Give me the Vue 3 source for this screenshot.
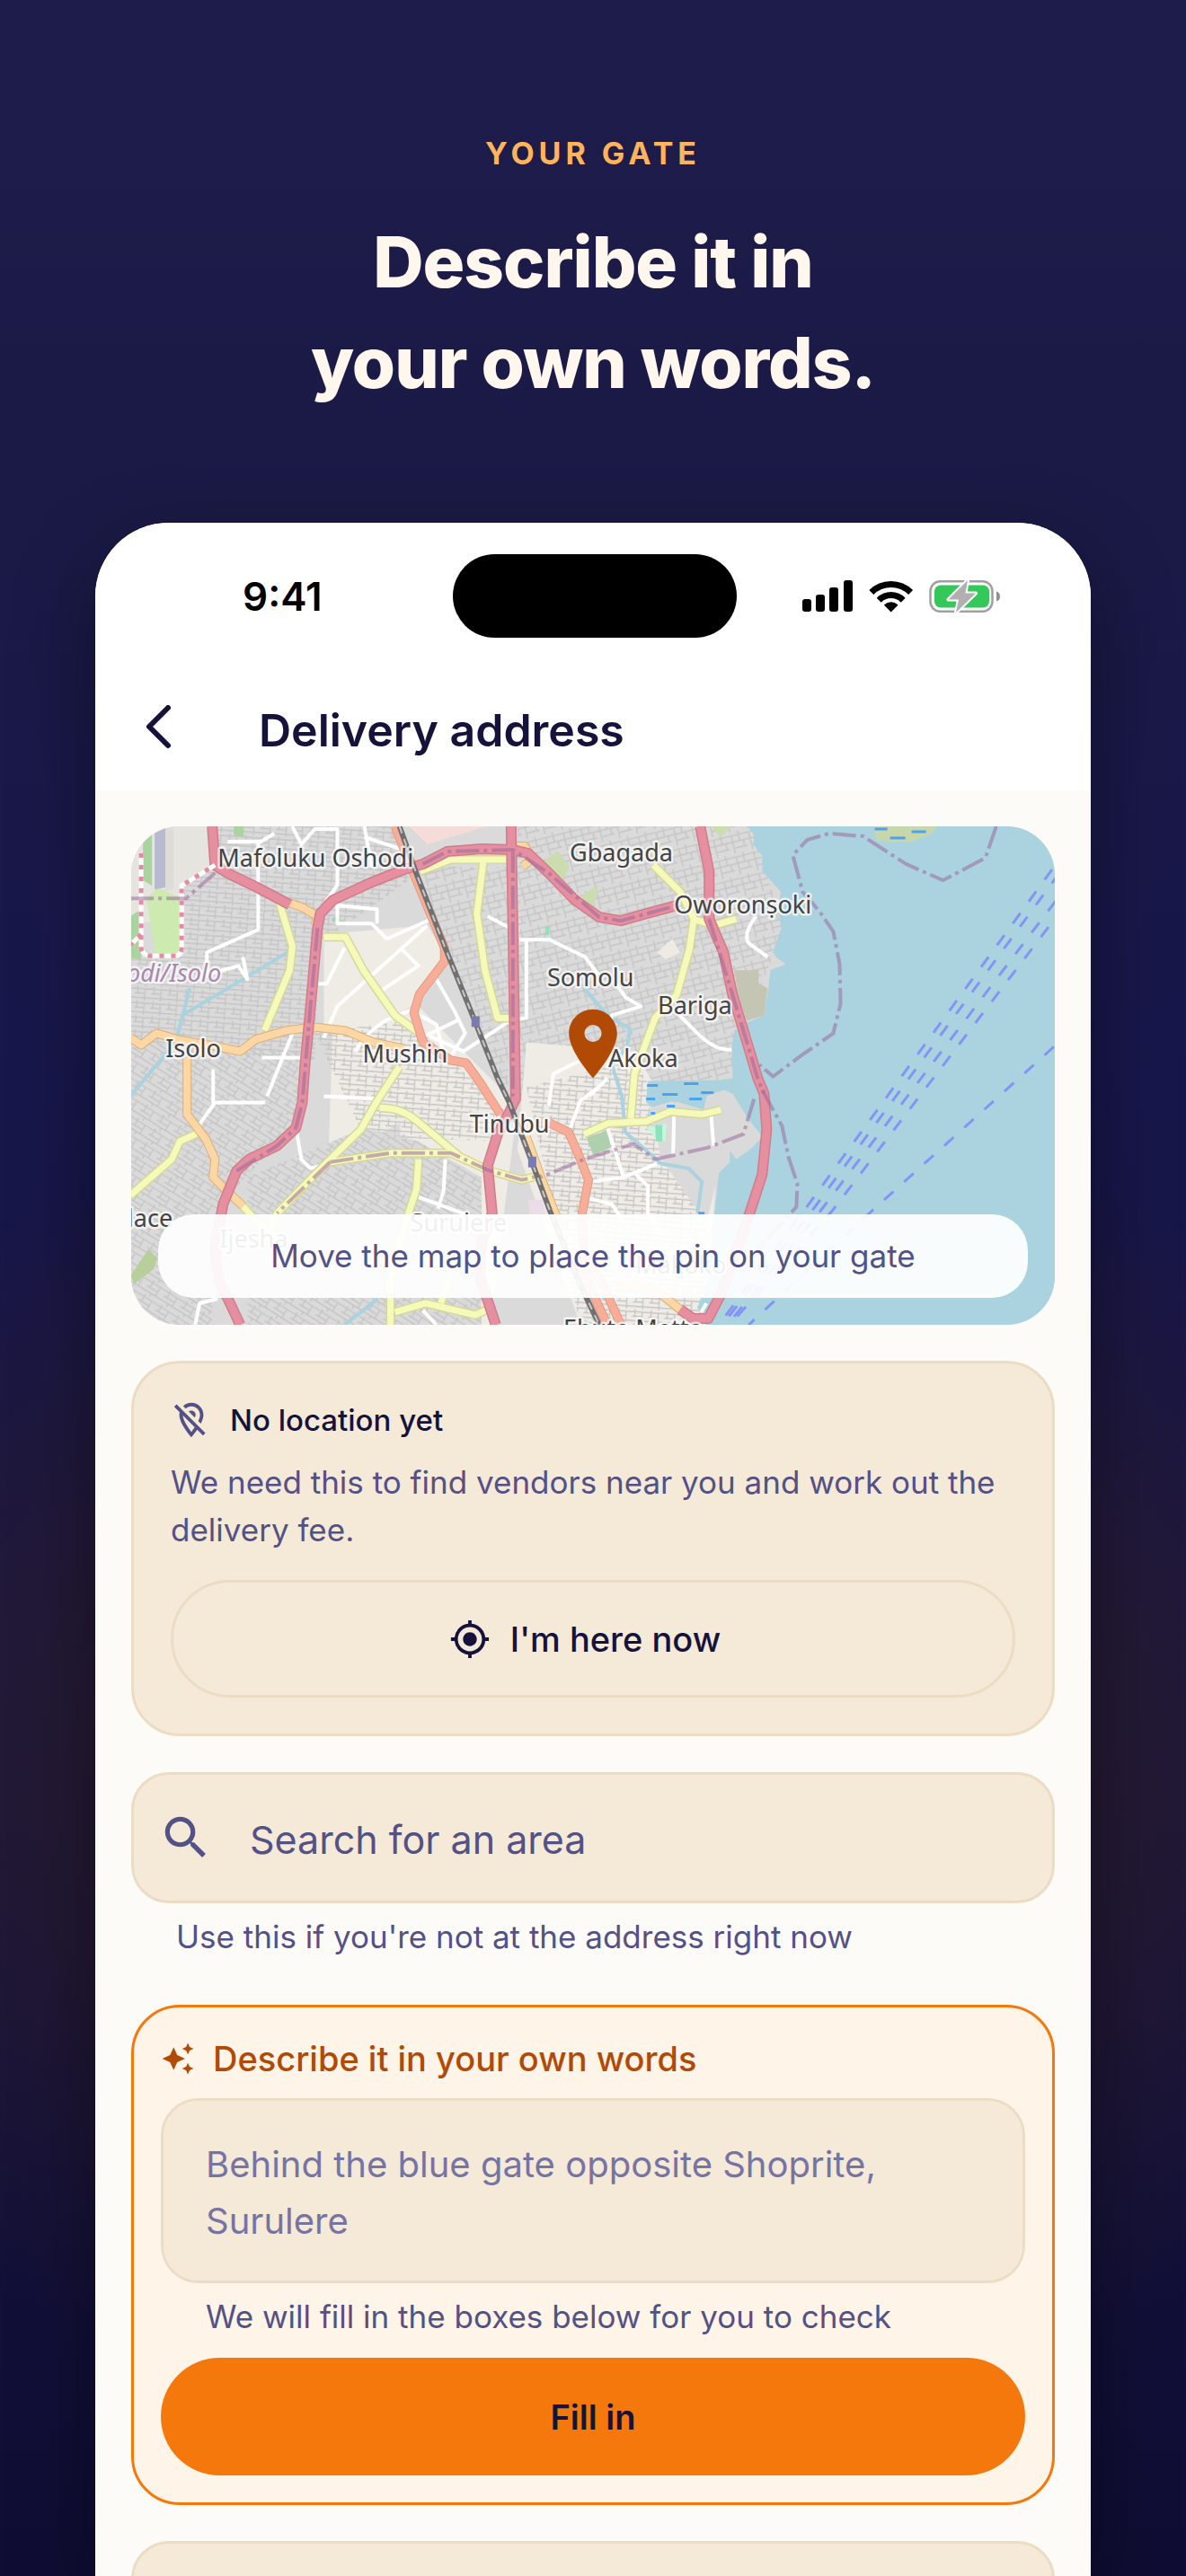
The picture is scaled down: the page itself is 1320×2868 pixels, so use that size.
<template>
  <main class="page">
    <header class="intro">
      <p class="eyebrow">YOUR GATE</p>
      <h1 class="headline">Describe it in<br>your own words.</h1>
    </header>

    <section class="phone">
      <div class="status-bar">
        <span class="status-time">9:41</span>
        <div class="island"></div>
        <svg class="status-icons" viewBox="0 0 221 36" aria-hidden="true">
          <rect x="0" y="21" width="10" height="14" rx="3" />
          <rect x="15" y="16" width="10" height="19" rx="3" />
          <rect x="30" y="8" width="10" height="27" rx="3" />
          <rect x="46" y="0" width="10" height="35" rx="3" />
          <path d="M76.800 13.600A31 31 0 0 1 120.600 13.600" class="wifi-arc" />
          <path d="M85.200 22.200A19 19 0 0 1 112.200 22.200" class="wifi-arc" />
          <path d="M90.800 27.600Q98.700 21 106.600 27.600L98.700 35.500Z" />
          <rect x="142.500" y="1.200" width="69" height="33.600" rx="11" class="battery-shell" />
          <rect x="147" y="5.500" width="61" height="25" rx="7" class="battery-level" />
          <path d="M216 12.500Q220 13.500 220 18T216 23.500Z" class="battery-nub" />
          <path d="M184 0L162.500 21.500H174L171 36L193 14.500H181.500Z" class="battery-bolt" />
        </svg>
      </div>

      <nav class="app-bar">
        <button class="back-btn" type="button" aria-label="Back">
          <svg viewBox="0 0 34 56" aria-hidden="true">
            <path d="M27 3L6 24L27 45" />
          </svg>
        </button>
        <h2 class="app-title">Delivery address</h2>
      </nav>

      <div class="content">
        <!-- Map -->
        <div class="map-card">
          <svg class="map" viewBox="0 0 1028 554" preserveAspectRatio="xMidYMid slice" role="img" aria-label="Map of Lagos">
            <defs>
              <pattern id="streets-a" width="22" height="18" patternUnits="userSpaceOnUse" patternTransform="rotate(32)">
                <path d="M0 3H22M0 9H14M0 14H22M4 0V9M14 3V14M9 14V18" />
              </pattern>
              <pattern id="streets-b" width="20" height="24" patternUnits="userSpaceOnUse" patternTransform="rotate(-14)">
                <path d="M0 4H20M0 11H20M6 18H20M5 4V24M13 0V11M17 11V18" />
              </pattern>
              <pattern id="streets-c" width="18" height="16" patternUnits="userSpaceOnUse" patternTransform="rotate(4)">
                <path d="M0 3H18M0 8H11M0 13H18M3 0V8M11 3V16" />
              </pattern>
            </defs>

            <rect width="1028" height="554" fill="#dadada" />
            <path v-for="(b, i) in blocks" :key="'b' + i" :d="b.d" :fill="b.fill" />
            <path :d="water" fill="#aad3df" />
            <path v-for="(b, i) in patches" :key="'p' + i" :d="b.d" :fill="b.fill" />

            <g class="creek">
              <path v-for="d in creeks" :key="d" :d="d" />
            </g>
            <g class="street">
              <path v-for="d in minorRoads" :key="d" :d="d" />
            </g>

            <g v-for="kind in roads" :key="kind.name" :class="['road', kind.name]">
              <path v-for="d in kind.paths" :key="'case' + d" :d="d" class="casing" />
              <path v-for="d in kind.paths" :key="d" :d="d" class="fill" />
            </g>

            <path :d="railway" class="rail-bed" />
            <path :d="railway" class="rail-ties" />
            <rect x="379" y="211" width="9" height="12" fill="#7a7ab0" />
            <rect x="442" y="367" width="9" height="12" fill="#7a7ab0" />

            <path d="M12 30V136Q14 144 24 144H50Q57 144 57 134V66L94 43M12 120L0 132" class="airport-fence" />
            <path d="M12 30V136Q14 144 24 144H50Q57 144 57 134V66L94 43M12 120L0 132" class="airport-dash" />

            <g class="boundary">
              <path v-for="d in boundaries" :key="d" :d="d" />
            </g>
            <g class="ferry">
              <path v-for="d in ferries" :key="d" :d="d" />
            </g>
            <path class="marsh" d="M827 3H841M868 6H884M844 13H861M574 288H586M615 286H631M591 298H608M634 296H648M573 303H583M621 303H635M596 311H605M578 319H583M631 430H638" />

            <text
              v-for="p in places"
              :key="p.name"
              :x="p.x"
              :y="p.y"
              :text-anchor="p.anchor || 'start'"
              :class="['place', p.kind]"
            >{{ p.name }}</text>
          </svg>

          <svg class="pin" viewBox="0 0 24 24" aria-hidden="true">
            <path d="M12 2C8.130 2 5 5.130 5 9c0 5.250 7 13 7 13s7-7.750 7-13c0-3.870-3.130-7-7-7zm0 9.500a2.500 2.500 0 0 1 0-5 2.500 2.500 0 0 1 0 5z" />
          </svg>
          <p class="map-hint">Move the map to place the pin on your gate</p>
        </div>

        <!-- Current location -->
        <section class="card">
          <div class="card-head">
            <svg class="icon-md" viewBox="0 0 24 24" aria-hidden="true">
              <path d="M12 4c2.760 0 5 2.240 5 5 0 1.060-.39 2.320-1 3.620l1.490 1.490C18.370 12.360 19 10.570 19 9c0-3.870-3.130-7-7-7-1.840 0-3.500.71-4.750 1.860l1.430 1.430C9.550 4.500 10.720 4 12 4zm0 2.500c-.59 0-1.130.21-1.560.56l3.500 3.500c.35-.43.56-.97.56-1.560 0-1.380-1.120-2.500-2.500-2.500zM3.410 2.860L2 4.270l3.180 3.180C5.070 7.950 5 8.470 5 9c0 5.250 7 13 7 13s1.670-1.850 3.380-4.350L18.730 21l1.410-1.410L3.410 2.860zM12 18.880c-2.010-2.580-4.800-6.740-4.980-9.590l6.920 6.920c-.65.98-1.330 1.890-1.940 2.670z" />
            </svg>
            <h3>No location yet</h3>
          </div>
          <p class="card-text">We need this to find vendors near you and work out the delivery fee.</p>
          <button class="btn outline-btn" type="button">
            <svg class="icon-md" viewBox="0 0 24 24" aria-hidden="true">
              <path d="M12 8c-2.210 0-4 1.790-4 4s1.790 4 4 4 4-1.790 4-4-1.790-4-4-4zm8.940 3A8.994 8.994 0 0 0 13 3.060V1h-2v2.060A8.994 8.994 0 0 0 3.060 11H1v2h2.060A8.994 8.994 0 0 0 11 20.940V23h2v-2.060A8.994 8.994 0 0 0 20.940 13H23v-2h-2.060zM12 19c-3.870 0-7-3.130-7-7s3.130-7 7-7 7 3.130 7 7-3.130 7-7 7z" />
            </svg>
            I'm here now
          </button>
        </section>

        <!-- Area search -->
        <div>
          <label class="search-box">
            <svg class="icon-lg" viewBox="0 0 24 24" aria-hidden="true">
              <path d="M15.500 14h-.79l-.28-.27A6.471 6.471 0 0 0 16 9.500 6.500 6.500 0 1 0 9.500 16c1.610 0 3.090-.59 4.230-1.570l.27.28v.79l5 4.990L20.490 19l-4.990-5zm-6 0C7.010 14 5 11.990 5 9.500S7.010 5 9.500 5 14 7.010 14 9.500 11.990 14 9.500 14z" />
            </svg>
            <input v-model="area" type="search" placeholder="Search for an area" aria-label="Search for an area">
          </label>
          <p class="helper search-helper">Use this if you're not at the address right now</p>
        </div>

        <!-- Free text description -->
        <form class="describe" @submit.prevent>
          <label class="describe-head" for="description">
            <svg class="icon-sm" viewBox="0 0 24 24" aria-hidden="true">
              <path d="M19 9l1.250-2.750L23 5l-2.750-1.250L19 1l-1.250 2.750L15 5l2.750 1.250L19 9zm-7.500.5L9 4 6.500 9.500 1 12l5.500 2.500L9 20l2.500-5.500L17 12l-5.500-2.500zM19 15l-1.250 2.750L15 19l2.750 1.250L19 23l1.250-2.750L23 19l-2.750-1.250L19 15z" />
            </svg>
            Describe it in your own words
          </label>
          <textarea
            id="description"
            v-model="description"
            rows="2"
            placeholder="Behind the blue gate opposite Shoprite, Surulere"
          ></textarea>
          <p class="helper">We will fill in the boxes below for you to check</p>
          <button class="btn fill-btn" type="submit">Fill in</button>
        </form>

        <label class="search-box">
          <input v-model="street" type="text" aria-label="Street address">
        </label>
      </div>
    </section>
  </main>
</template>

<script setup>
import { ref } from 'vue';

const area = ref('');
const description = ref('');
const street = ref('');

const water = 'M686 0L693 10L692 20L702 33L702 50L723 73L719 90L723 113L714 140L718 146L728 153L711 160L709 180L704 210L685 218L671 227L668 247L669 280L656 282L575 283L573 307L580 312L604 305L637 315L640 300L659 293L669 297L685 323L702 345L690 358L673 370L666 360L666 373L654 385L649 430L645 457L642 503L630 535L640 554H1028V0Z';

const blocks = [
  { d: 'M60 0H300L310 60L210 130L205 260L0 240V140L60 140Z', fill: 'url(#streets-c)' },
  { d: 'M0 240L190 250L185 330L100 420L90 554H0Z', fill: 'url(#streets-a)' },
  { d: 'M325 45L420 45V300L330 90Z', fill: 'url(#streets-b)' },
  { d: 'M430 0H690L725 110L665 280L560 330L430 300Z', fill: 'url(#streets-b)' },
  { d: 'M225 220L320 200L430 310L400 554H300V330L220 370Z', fill: '#efece6' },
  { d: 'M215 120L330 110L355 150L315 200L215 230Z', fill: '#efece6' },
  { d: 'M440 240L560 250L650 400L640 554H500L430 360Z', fill: '#efece6' },
  { d: 'M205 230L310 215L420 320L410 350L260 345Z', fill: 'url(#streets-c)' },
  { d: 'M130 390L260 335L320 350L390 390V554H130Z', fill: '#dadada' },
  { d: 'M130 390L260 335L320 350L390 390V554H130Z', fill: 'url(#streets-a)' },
  { d: 'M440 290L560 260L640 400V554H500Z', fill: 'url(#streets-c)' },
  { d: 'M575 300L690 325L655 380L640 440L590 370Z', fill: '#dadada' },
];

const patches = [
  { d: 'M0 0H90L94 45L60 62V100L0 110Z', fill: '#e5e4de' },
  { d: 'M14 0H24V66L14 60Z', fill: '#aad3a0' },
  { d: 'M0 100L12 92V148L0 146Z', fill: '#aad3a0' },
  { d: 'M18 80L30 68L57 80V140L50 146H28Z', fill: '#cdebb0' },
  { d: 'M27 0H39V68L27 70Z', fill: '#b9b9d2' },
  { d: 'M39 0H48V70L39 72Z', fill: '#dddcd8' },
  { d: 'M115 0H126V12L115 10Z', fill: '#aed1a0' },
  { d: 'M310 0H396L330 20Z', fill: '#f5dcd8' },
  { d: 'M460 38L475 27L488 45L480 60L462 52Z', fill: '#cbdcae' },
  { d: 'M504 75L520 65L514 92L498 90Z', fill: '#cbdcae' },
  { d: 'M645 0H668L656 12Z', fill: '#cbdcae' },
  { d: 'M585 140L602 125L611 140L595 148Z', fill: '#efebe3' },
  { d: 'M671 160H698V175L708 180L704 210L685 216L676 190Z', fill: '#c5c5b3' },
  { d: 'M0 500L20 470L30 480L26 492L5 508Z', fill: '#b8cf9c' },
  { d: 'M507 346L530 338L534 357L514 365Z', fill: '#aed0ae' },
  { d: 'M573 335L596 330L594 350L582 345Z', fill: '#c9f5dc' },
  { d: 'M583 332H591V350H584Z', fill: '#8be2bd' },
  { d: 'M442 415H458L462 433H444Z', fill: '#ecdcea' },
  { d: 'M461 111H465V121H461Z', fill: '#8be2bd' },
  { d: 'M224 102L233 98V106H224Z', fill: '#a5d2b0' },
  { d: 'M826 0L829 16L866 18L890 8L896 0Z', fill: '#c8d7ab' },
];

const creeks = [
  'M66 180L53 230M0 300L50 240L58 210L175 140',
  'M504 180L530 210L555 225L552 245L535 265L546 300L550 340L590 375L620 380L635 395L630 430',
  'M238 554L275 525',
];

const minorRoads = [
  'M108 17H145L160 8M142 15V115L85 140V165L120 155L130 170L125 145',
  'M180 0L190 20L205 3H230V65L208 98M260 0L268 45M260 12L300 25',
  'M230 85V108H268L285 125L335 103M232 88L274 92V108M330 110L230 200L215 235M300 135L320 155L275 185',
  'M209 175H218L238 135M250 250Q270 215 312 205L340 220L350 260M365 215L330 232L370 250L428 212',
  'M340 170L360 205L372 230L350 265M180 230L152 300M146 257H190M92 270V307H150M94 307L74 335',
  'M397 100L420 112M432 126H466L480 133L505 145L520 165M425 215L440 213V126',
  'M695 100Q680 120 687 130L708 145M540 175L550 190L567 200L535 210L530 240L500 260L470 275L465 310',
  'M610 210L630 230Q650 250 668 248M604 320L603 365M645 318L648 355M530 335L548 390L510 395M548 390L585 375',
  'M560 385L575 400V430L592 455M508 413L535 420L548 440M215 300L275 303M184 335L190 370L200 380L222 375',
  'M350 370L348 405L342 425M320 412L375 432M97 525L77 530L72 554M325 538L340 554M487 340L500 305L520 290M510 300L530 280',
  'M640 530L634 540',
];

const roads = [
  {
    name: 'yellow',
    paths: [
      'M165 83L180 133L177 160L149 227',
      'M215 123H239L259 160L294 210L321 230',
      'M322 50L356 37H418',
      'M392 40L385 97L394 160L408 213H421',
      'M299 267L273 307L256 337L222 370L200 392L163 430L150 460',
      'M277 313Q300 312 318 327L366 367L397 382L435 393L456 388',
      'M222 373L290 363H356L375 372',
      'M320 370L318 403L308 433L289 503V554',
      'M294 540L328 530L383 543L397 537M345 530L355 500',
      'M0 410L46 370L55 350L77 340',
      'M581 43L611 73L626 103L621 137L607 187L583 213L560 275L556 325',
      'M624 103L649 110L673 103',
      'M504 342L531 330L573 328L600 317L635 320L656 315',
      'M125 422L150 450',
    ],
  },
  {
    name: 'orange',
    paths: [
      'M0 235L12 243L29 230L53 237L87 243L122 250L139 237L173 227L204 223L239 227L270 240L304 247',
      'M63 257V320L84 348L94 370L92 390L105 403L125 422',
      'M177 85L191 90L208 100L205 110',
      'M425 22H438L446 36L436 45',
      'M458 395L476 440M440 345L458 395',
      'M566 510L587 518L611 537M540 512L566 510',
    ],
  },
  {
    name: 'coral',
    paths: [
      'M294 0L315 53L349 135V150L321 187L315 207L325 240L356 260L373 263L390 287L411 320',
      'M466 330L487 340L500 370L509 393L502 430L504 477L525 510L545 554',
      'M500 490L530 554',
    ],
  },
  {
    name: 'motorway',
    paths: [
      'M91 0L94 43L108 52L139 67L177 87',
      'M122 554L98 503L94 470L103 420L118 383L132 370L163 355L184 335L191 307L194 265L199 213L208 113L211 97L225 82L266 63L304 48L325 42L352 28L390 25L425 26L442 30L466 53L494 82L521 101L545 105L573 97L607 88',
      'M423 0L425 113L428 303L421 318L408 342L397 377L402 430L390 463L389 503L406 554',
      'M633 0L643 50V103L659 140L669 187L683 233L697 280L704 297L707 337L702 387L687 433L656 520L642 547H625L611 537',
    ],
  },
];

const railway = 'M299 0L318 53L349 133L383 217L408 280L421 307L445 370L466 427L500 510L521 554';

const boundaries = [
  'M962 0L950 35L903 60L862 42L814 11L776 8L752 15L736 32L747 73L766 95L781 117L788 153L789 197L781 230L745 255L714 278L699 265',
  'M702 293L724 333L731 367L741 397L740 423L697 470',
  'M693 303L681 342L642 357L583 370L559 353L504 370L456 390',
  'M0 80H62L94 52',
  'M208 113L199 213L191 307L184 335L163 355L118 383',
  'M425 26V300M325 42L352 28L425 26L466 53L521 101L545 105L607 88M643 103L669 187L697 280L704 297',
  'M222 373L290 363H356L397 382L435 393L456 388M222 373L163 430',
];

const ferries = [
  'M1024 48L750 425L659 547',
  'M1032 52L759 425L663 547',
  'M1028 83L767 427L669 547',
  'M1020 112L780 427L672 547',
  'M1026 245L821 430L687 554',
];

const places = [
  { name: 'Mafoluku Oshodi', x: 97, y: 45 },
  { name: 'Gbagada', x: 488, y: 39 },
  { name: 'Oworonṣoki', x: 604, y: 97 },
  { name: 'odi/Isolo', x: 101, y: 173, anchor: 'end', kind: 'district' },
  { name: 'Somolu', x: 463, y: 178 },
  { name: 'Bariga', x: 586, y: 209 },
  { name: 'Isolo', x: 39, y: 257 },
  { name: 'Mushin', x: 258, y: 263 },
  { name: 'Akoka', x: 531, y: 268 },
  { name: 'Tinubu', x: 377, y: 340 },
  { name: 'lace', x: 47, y: 445, anchor: 'end' },
  { name: 'Surulere', x: 311, y: 450 },
  { name: 'Ijesha', x: 99, y: 468 },
  { name: 'Makoko', x: 561, y: 497 },
  { name: 'Ebute Metta', x: 481, y: 568 },
];
</script>

<style>
body {
  margin: 0;
  background: #16143c;
}
</style>

<style scoped>
.page {
  box-sizing: border-box;
  display: flex;
  flex-direction: column;
  height: 100vh;
  padding: 150px 106px 0;
  overflow: hidden;
  font-family: Inter, "Liberation Sans", sans-serif;
  color: #15133c;
  background:
    radial-gradient(ellipse 1100px 740px at 50% 1960px, rgba(62, 36, 28, 0.75), rgba(62, 36, 28, 0) 100%),
    linear-gradient(180deg, #1d1c4b 0%, #1b1a46 20%, #18174b 40%, #15133f 75%, #0f0d33 100%);
}

h1, h2, h3, p {
  margin: 0;
}

button, input, textarea {
  font-family: inherit;
  color: inherit;
}

.intro {
  display: flex;
  flex-direction: column;
  gap: 44px;
  margin-bottom: 122px;
  text-align: center;
}

.eyebrow {
  font-size: 34px;
  line-height: 42px;
  font-weight: 700;
  letter-spacing: 5px;
  color: #ffb35c;
}

.headline {
  font-size: 78px;
  line-height: 112px;
  font-weight: 800;
  letter-spacing: -1px;
  color: #fff7ee;
}

.phone {
  flex: 1;
  min-height: 0;
  overflow: hidden;
  border-radius: 82px 82px 0 0;
  background: #fdfbf7;
  box-shadow: 0 30px 90px rgba(0, 0, 0, 0.4);
}

/* Status bar */
.status-bar {
  display: grid;
  grid-template-columns: 1fr 316px 1fr;
  align-items: center;
  padding: 35px 100px 0 104px;
  background: #fff;
}

.status-time {
  padding-left: 60px;
  font-size: 44px;
  font-weight: 600;
  color: #000;
}

.island {
  height: 93px;
  border-radius: 47px;
  background: #000;
}

.status-icons {
  justify-self: end;
  width: 221px;
  height: 36px;
}

.wifi-arc {
  fill: none;
  stroke: #000;
  stroke-width: 7;
}

.battery-shell {
  fill: none;
  stroke: #a0a0a0;
  stroke-width: 2.5;
}

.battery-level {
  fill: #34c759;
}

.battery-nub {
  fill: #909090;
}

.battery-bolt {
  fill: #b0b0b0;
  stroke: #fff;
  stroke-width: 4;
  paint-order: stroke;
  stroke-linejoin: round;
}

/* App bar */
.app-bar {
  display: flex;
  align-items: center;
  gap: 94px;
  padding: 68px 54px 32px;
  background: #fff;
}

.back-btn {
  display: flex;
  padding: 0;
  border: 0;
  background: none;
}

.back-btn svg {
  width: 34px;
  height: 56px;
  fill: none;
  stroke: #15133c;
  stroke-width: 6;
  stroke-linecap: round;
  stroke-linejoin: round;
}

.app-title {
  font-size: 50px;
  line-height: 70px;
  font-weight: 600;
}

.content {
  display: flex;
  flex-direction: column;
  gap: 40px;
  padding: 40px;
}

/* Map */
.map-card {
  position: relative;
  height: 555px;
  overflow: hidden;
  border-radius: 54px;
}

.map {
  display: block;
  width: 100%;
  height: 100%;
}

pattern path {
  fill: none;
  stroke: #c4c4c4;
  stroke-width: 1.3;
}

.creek path {
  fill: none;
  stroke: #aad3df;
  stroke-width: 4;
}

.street path {
  fill: none;
  stroke: #fff;
  stroke-width: 4;
  stroke-linejoin: round;
}

.road path {
  fill: none;
  stroke-linejoin: round;
}

.yellow .casing { stroke: #d6d898; stroke-width: 10; }
.yellow .fill { stroke: #f5f9ba; stroke-width: 7; }
.orange .casing { stroke: #dcb072; stroke-width: 10; }
.orange .fill { stroke: #fcd6a4; stroke-width: 8; }
.coral .casing { stroke: #e39a84; stroke-width: 10; }
.coral .fill { stroke: #f7ad98; stroke-width: 8; }
.motorway .casing { stroke: #cf7d8a; stroke-width: 12; }
.motorway .fill { stroke: #e58fa0; stroke-width: 9; }

.rail-bed {
  fill: none;
  stroke: #707070;
  stroke-width: 6;
}

.rail-ties {
  fill: none;
  stroke: #c8c8c8;
  stroke-width: 2;
  stroke-dasharray: 8 7;
}

.airport-fence {
  fill: none;
  stroke: #fff;
  stroke-width: 5;
}

.airport-dash {
  fill: none;
  stroke: #e58aa0;
  stroke-width: 5;
  stroke-dasharray: 5 8;
}

.boundary path {
  fill: none;
  stroke: #9b6b9b;
  stroke-opacity: 0.55;
  stroke-width: 4;
  stroke-dasharray: 26 5 4 5;
}

.ferry path {
  fill: none;
  stroke: #8494f5;
  stroke-width: 3;
  stroke-dasharray: 14 16;
}

.marsh {
  stroke: #4ba3f0;
  stroke-width: 3;
}

.place {
  font-family: "Noto Sans", sans-serif;
  font-size: 27px;
  fill: #444;
  stroke: #fff;
  stroke-opacity: 0.7;
  stroke-width: 5;
  stroke-linejoin: round;
  paint-order: stroke;
}

.district {
  font-style: italic;
  fill: #a888ad;
}

.pin {
  position: absolute;
  top: 196px;
  left: calc(50% - 46px);
  width: 92px;
  height: 92px;
  fill: #b04a05;
}

.map-hint {
  position: absolute;
  right: 30px;
  bottom: 30px;
  left: 30px;
  padding: 20px;
  border-radius: 40px;
  font-size: 35px;
  line-height: 53px;
  text-align: center;
  color: #535185;
  background: rgba(255, 255, 255, 0.92);
}

/* Cards */
.card {
  padding: 39px 41px 40px;
  border: 3px solid #ecdcc3;
  border-radius: 54px;
  background: #f5e9d8;
}

.card-head {
  display: flex;
  align-items: center;
  gap: 20px;
  fill: #535185;
}

.card-head h3 {
  font-size: 33px;
  line-height: 48px;
  font-weight: 500;
}

.card-text {
  margin: 19px 0 29px;
  font-size: 35px;
  line-height: 53px;
  color: #535185;
}

.icon-sm {
  width: 38px;
  height: 38px;
}

.icon-md {
  width: 46px;
  height: 46px;
}

.icon-lg {
  flex: none;
  width: 62px;
  height: 62px;
}

.btn {
  display: flex;
  align-items: center;
  justify-content: center;
  gap: 22px;
  box-sizing: border-box;
  width: 100%;
  height: 131px;
  border-radius: 66px;
  font-size: 38px;
  line-height: 50px;
}

.outline-btn {
  padding-right: 24px;
  border: 3px solid #ecdcc3;
  font-weight: 500;
  background: none;
  fill: #15133c;
}

.fill-btn {
  border: 0;
  font-weight: 600;
  background: #f5780c;
}

.search-box {
  display: flex;
  align-items: center;
  gap: 40px;
  box-sizing: border-box;
  height: 146px;
  padding: 0 27px;
  border: 3px solid #ecdcc3;
  border-radius: 42px;
  background: #f5e9d8;
  fill: #535185;
}

.search-box input {
  flex: 1;
  min-width: 0;
  padding: 3px 0 0;
  border: 0;
  outline: 0;
  font-size: 43px;
  line-height: 60px;
  background: none;
}

.search-box input::placeholder {
  color: #535185;
  opacity: 1;
}

.helper {
  padding: 12px 50px 21px;
  font-size: 35px;
  line-height: 50px;
  color: #535185;
}

.search-helper {
  padding-bottom: 11px;
}

.describe {
  padding: 32px 30px 30px;
  border: 3px solid #f5780c;
  border-radius: 54px;
  background: #fff4e8;
}

.describe-head {
  display: flex;
  align-items: center;
  gap: 20px;
  margin-bottom: 19px;
  font-size: 38px;
  line-height: 50px;
  font-weight: 500;
  color: #b04a05;
  fill: #b04a05;
}

textarea {
  display: block;
  box-sizing: border-box;
  width: 100%;
  height: 206px;
  padding: 39px 47px;
  border: 3px solid #ecdcc3;
  border-radius: 42px;
  outline: 0;
  font-size: 40px;
  line-height: 63px;
  background: #f5e9d8;
  resize: none;
}

textarea::placeholder {
  color: #7674a3;
  opacity: 1;
}
</style>
